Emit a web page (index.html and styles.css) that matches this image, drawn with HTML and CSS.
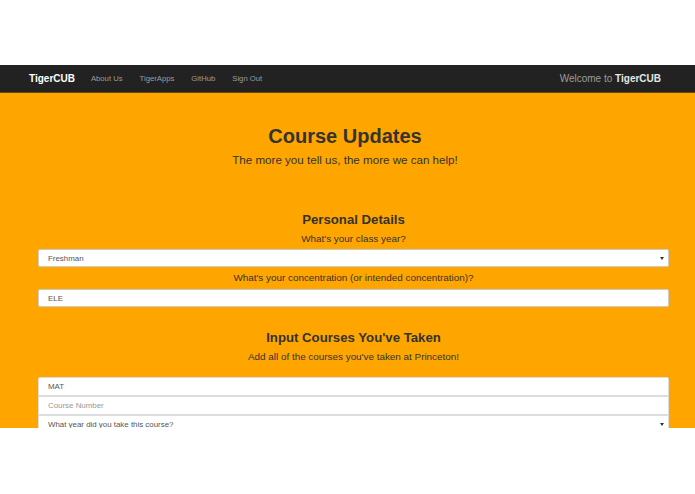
FILE: index.html
```html
<!DOCTYPE html>
<html lang="en">

<head>
    <meta charset="UTF-8">
    <meta name="viewport" content="width=device-width, initial-scale=1.0">
    <title>TigerCUB - Course Updates</title>
    <link rel="stylesheet" href="styles.css">
</head>

<body>
    <div class="top-space"></div>

    <div class="page">
        <!-- Top navbar -->
        <nav class="navbar">
            <a class="brand" href="#">TigerCUB</a>
            <ul class="nav-links">
                <li><a href="#">About Us</a></li>
                <li><a href="#">TigerApps</a></li>
                <li><a href="#">GitHub</a></li>
                <li><a href="#">Sign Out</a></li>
            </ul>
            <div class="welcome">Welcome to <b>TigerCUB</b></div>
        </nav>

        <div class="intro">
            <h1 class="title">Course Updates</h1>
            <p class="lead">The more you tell us, the more we can help!</p>
        </div>

        <!-- Personal details -->
        <form class="form">
            <h3 class="section-title">Personal Details</h3>
            <label class="question">What's your class year?</label>
            <div class="select-wrap">
                <select class="field">
                    <option>Freshman</option>
                    <option>Sophomore</option>
                    <option>Junior</option>
                    <option>Senior</option>
                </select>
            </div>
            <label class="question q-tight">What's your concentration (or intended concentration)?</label>
            <input type="text" class="field" value="ELE">

            <h3 class="section-title courses-title">Input Courses You've Taken</h3>
            <label class="question">Add all of the courses you've taken at Princeton!</label>

            <div class="course-group">
                <input type="text" class="field" value="MAT">
                <input type="text" class="field" placeholder="Course Number">
                <div class="select-wrap">
                    <select class="field">
                        <option>What year did you take this course?</option>
                    </select>
                </div>
            </div>
        </form>
    </div>
</body>

</html>
```

FILE: styles.css
```css
body {
    margin: 0;
    background-color: #fff;
    font-family: "Liberation Sans", Arial, sans-serif;
    color: #333;
}

.top-space {
    height: 65px;
}

.page {
    height: 363px;
    overflow: hidden;
    background-color: #ffa500; /* orange */
}

/* navbar */
.navbar {
    display: flex;
    align-items: center;
    height: 27px;
    padding: 0 34px 0 29px;
    background-color: #222;
    border-bottom: 1px solid #6b4a05;
    line-height: 12px;
}

.brand {
    font-size: 10px;
    font-weight: bold;
    color: #fff;
    text-decoration: none;
    margin-right: 16px;
}

.nav-links {
    display: flex;
    align-items: center;
    gap: 17px;
    list-style: none;
    margin: 0;
    padding: 0;
}

.nav-links a {
    display: block;
    font-size: 7.7px;
    line-height: 10px;
    color: #9d9d9d;
    text-decoration: none;
}

.welcome {
    margin-left: auto;
    font-size: 10px;
    color: #9d9d9d;
}

.welcome b {
    color: #e6e6e6;
}

/* heading */
.intro {
    text-align: center;
    padding: 32px 5px 0 0;
}

.title {
    margin: 0;
    font-size: 20px;
    line-height: 22px;
}

.lead {
    margin: 5px 0 0;
    font-size: 11.6px;
    line-height: 16px;
}

/* form */
.form {
    display: flex;
    flex-direction: column;
    padding: 44px 26px 0 38px;
    text-align: center;
}

.section-title {
    margin: 0;
    font-size: 13.2px;
    line-height: 16px;
}

.courses-title {
    margin-top: 23px;
}

.question {
    margin: 4px 0 4px;
    font-size: 9.9px;
    line-height: 13px;
}

.q-tight {
    margin-top: 4px;
    margin-bottom: 5px;
}

.field {
    display: block;
    box-sizing: border-box;
    width: 100%;
    height: 18px;
    margin: 0;
    padding: 0 9px;
    border: 1px solid #ccc;
    border-radius: 2px;
    background-color: #fff;
    font-family: "Liberation Sans", Arial, sans-serif;
    font-size: 7.9px;
    color: #555;
    outline: none;
}

.field::placeholder {
    color: #999;
}

select.field {
    appearance: none;
    -webkit-appearance: none;
}

.select-wrap {
    position: relative;
}

.select-wrap::after {
    content: "";
    position: absolute;
    right: 5px;
    top: 8px;
    border-left: 2px solid transparent;
    border-right: 2px solid transparent;
    border-top: 3px solid #333;
}

.course-group {
    margin-top: 10px;
}

.course-group .field {
    height: 19px;
    border-color: #ddd;
    border-radius: 0;
}

.course-group > .field:first-child {
    border-radius: 2px 2px 0 0;
}
```
